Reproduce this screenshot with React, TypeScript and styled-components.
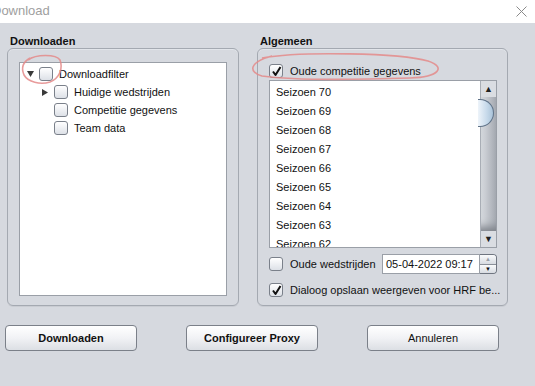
import styled, { createGlobalStyle } from "styled-components";

const GlobalStyle = createGlobalStyle`
  html, body {
    margin: 0;
    padding: 0;
    background: #d6d9df;
  }
  body {
    font-family: "Liberation Sans", Arial, sans-serif;
    font-size: 11px;
    color: #111;
  }
`;

/* ------------------ Window ------------------ */

const Window = styled.div`
  width: 535px;
  height: 386px;
  display: flex;
  flex-direction: column;
  background: #d6d9df;
  position: relative;
  overflow: hidden;
`;

const TitleBar = styled.div`
  height: 23px;
  background: #ffffff;
  display: flex;
  align-items: center;
  justify-content: space-between;
  padding: 0 8px 0 0;
  overflow: hidden;
`;

const Title = styled.span`
  margin-left: -8px;
  margin-top: -2px;
  font-family: "Liberation Sans", Arial, sans-serif;
  font-size: 13px;
  color: #a0a0a0;
`;

const Body = styled.div`
  display: flex;
  flex-direction: column;
  padding: 11px 0 0 7px;
`;

const Columns = styled.div`
  display: flex;
  gap: 18px;
`;

const Group = styled.div<{ $width: number }>`
  width: ${(p) => p.$width}px;
  display: flex;
  flex-direction: column;
`;

const GroupLabel = styled.div`
  font-weight: bold;
  font-size: 11px;
  height: 14px;
  line-height: 14px;
  padding-left: 3px;
`;

const Panel = styled.div<{ $pad: string }>`
  height: 258px;
  box-sizing: border-box;
  border: 1px solid #a4a9b1;
  border-radius: 6px;
  box-shadow: inset 0 1px 0 #e2e5ea, 0 1px 0 #c9ccd2;
  padding: ${(p) => p.$pad};
  display: flex;
  flex-direction: column;
`;

/* ------------------ Tree ------------------ */

const TreeBox = styled.div`
  flex: 1;
  background: #ffffff;
  border: 1px solid #9a9fa7;
  padding: 2px 0 0 4px;
`;

const TreeRow = styled.div<{ $indent: number }>`
  height: 18px;
  display: flex;
  align-items: center;
  padding-left: ${(p) => p.$indent}px;
`;

const Arrow = styled.span`
  width: 12px;
  display: inline-flex;
  justify-content: center;
  align-items: center;
  margin-right: 3px;
  svg {
    display: block;
  }
`;

const ArrowSpacer = styled.span`
  width: 15px;
`;

const Box = styled.span`
  width: 12px;
  height: 12px;
  border: 1px solid #7a808a;
  border-radius: 3px;
  background: linear-gradient(#ffffff, #dde1e7);
  display: inline-flex;
  align-items: center;
  justify-content: center;
  flex-shrink: 0;
  svg {
    display: block;
  }
`;

const Label = styled.span`
  margin-left: 6px;
  white-space: nowrap;
`;

/* ------------------ Right side ------------------ */

const CheckRow = styled.div<{ $mt?: number }>`
  display: flex;
  align-items: center;
  height: 16px;
  margin-top: ${(p) => p.$mt ?? 0}px;
`;

const CheckLabel = styled.span`
  margin-left: 7px;
  white-space: nowrap;
`;

const ListBox = styled.div`
  margin-top: 1px;
  height: 168px;
  box-sizing: border-box;
  border: 1px solid #9a9fa7;
  background: #ffffff;
  display: flex;
`;

const ListItems = styled.div`
  flex: 1;
  overflow: hidden;
  padding: 2px 0 0 6px;
`;

const ListItem = styled.div`
  height: 19px;
  line-height: 19px;
`;

const ScrollBar = styled.div`
  width: 15px;
  border-left: 1px solid #a9aeb6;
  display: flex;
  flex-direction: column;
`;

const ScrollArrow = styled.div`
  height: 16px;
  font-size: 9px;
  color: #222;
  display: flex;
  align-items: center;
  justify-content: center;
  background: #dadde2;
`;

const Track = styled.div`
  flex: 1;
  position: relative;
  background: linear-gradient(90deg, #d9dce1, #b9bdc4 60%, #a7abb3);
  box-shadow: inset 0 -10px 8px -6px #7c8088;
`;

const Thumb = styled.div`
  position: absolute;
  left: -3px;
  top: 2px;
  width: 16px;
  height: 28px;
  box-sizing: border-box;
  border: 1px solid #5f7288;
  border-left: none;
  border-radius: 0 14px 14px 0;
  background: linear-gradient(90deg, #eef4fa, #c6d9ea 60%, #aac3d9);
`;

const DateRow = styled.div`
  display: flex;
  align-items: center;
  margin-top: 6px;
  height: 20px;
`;

const DateField = styled.div`
  margin-left: auto;
  width: 98px;
  height: 20px;
  box-sizing: border-box;
  border: 1px solid #9a9fa7;
  background: #ffffff;
  display: flex;
  align-items: center;
  padding-left: 3px;
  white-space: nowrap;
  font-size: 11px;
`;

const Spinner = styled.div`
  width: 17px;
  height: 20px;
  box-sizing: border-box;
  border: 1px solid #6f7580;
  border-left: none;
  border-radius: 0 4px 4px 0;
  display: flex;
  flex-direction: column;
  overflow: hidden;
  flex-shrink: 0;
`;

const SpinHalf = styled.div<{ $dark?: boolean }>`
  flex: 1;
  font-size: 6px;
  display: flex;
  align-items: center;
  justify-content: center;
  color: ${(p) => (p.$dark ? "#111" : "#9aa0a8")};
  background: linear-gradient(#fafbfc, #d7dbe1);
  & + & {
    border-top: 1px solid #8a9099;
  }
`;

/* ------------------ Buttons ------------------ */

const ButtonRow = styled.div`
  display: flex;
  gap: 49px;
  margin: 19px 0 0 -2px;
`;

const Button = styled.button<{ $bold?: boolean }>`
  width: 132px;
  height: 26px;
  border: 1px solid #7b8089;
  border-radius: 4px;
  background: linear-gradient(#ffffff, #f1f2f5 50%, #dcdfe4);
  font-family: "Liberation Sans", Arial, sans-serif;
  font-size: 11px;
  font-weight: ${(p) => (p.$bold ? "bold" : "normal")};
  color: #111;
  padding: 0;
`;

/* ------------------ Annotation ------------------ */

const Marks = styled.svg`
  position: absolute;
  left: 0;
  top: 0;
  pointer-events: none;
`;

const Check = () => (
  <svg width="11" height="11" viewBox="0 0 11 11">
    <path
      d="M2 5.5 L4.5 9 L9.5 1"
      fill="none"
      stroke="#111"
      strokeWidth="2"
      strokeLinejoin="round"
    />
  </svg>
);

const Down = () => (
  <svg width="7" height="6" viewBox="0 0 7 6">
    <path d="M0 0 H7 L3.5 6 Z" fill="#3a3a3a" />
  </svg>
);

const Right = () => (
  <svg width="6" height="7" viewBox="0 0 6 7">
    <path d="M0 0 V7 L6 3.5 Z" fill="#3a3a3a" />
  </svg>
);

const CloseIcon = () => (
  <svg width="11" height="11" viewBox="0 0 11 11">
    <path d="M0.5 0.5 L10.5 10.5 M10.5 0.5 L0.5 10.5" stroke="#8a8a8a" strokeWidth="1" />
  </svg>
);

const seasons = [70, 69, 68, 67, 66, 65, 64, 63, 62];

const App = () => {
  return (
    <Window>
      <GlobalStyle />
      <TitleBar>
        <Title>Download</Title>
        <CloseIcon />
      </TitleBar>
      <Body>
        <Columns>
          <Group $width={232}>
            <GroupLabel>Downloaden</GroupLabel>
            <Panel $pad="13px 11px 9px 11px">
              <TreeBox>
                <TreeRow $indent={0}>
                  <Arrow>
                    <Down />
                  </Arrow>
                  <Box />
                  <Label>Downloadfilter</Label>
                </TreeRow>
                <TreeRow $indent={15}>
                  <Arrow>
                    <Right />
                  </Arrow>
                  <Box />
                  <Label>Huidige wedstrijden</Label>
                </TreeRow>
                <TreeRow $indent={15}>
                  <ArrowSpacer />
                  <Box />
                  <Label>Competitie gegevens</Label>
                </TreeRow>
                <TreeRow $indent={15}>
                  <ArrowSpacer />
                  <Box />
                  <Label>Team data</Label>
                </TreeRow>
              </TreeBox>
            </Panel>
          </Group>
          <Group $width={251}>
            <GroupLabel>Algemeen</GroupLabel>
            <Panel $pad="14px 10px 0 11px">
              <CheckRow>
                <Box>
                  <Check />
                </Box>
                <CheckLabel>Oude competitie gegevens</CheckLabel>
              </CheckRow>
              <ListBox>
                <ListItems>
                  {seasons.map((s) => (
                    <ListItem key={s}>Seizoen {s}</ListItem>
                  ))}
                </ListItems>
                <ScrollBar>
                  <ScrollArrow>▲</ScrollArrow>
                  <Track>
                    <Thumb />
                  </Track>
                  <ScrollArrow>▼</ScrollArrow>
                </ScrollBar>
              </ListBox>
              <DateRow>
                <Box />
                <CheckLabel>Oude wedstrijden</CheckLabel>
                <DateField>05-04-2022 09:17</DateField>
                <Spinner>
                  <SpinHalf>▲</SpinHalf>
                  <SpinHalf $dark>▼</SpinHalf>
                </Spinner>
              </DateRow>
              <CheckRow $mt={8}>
                <Box>
                  <Check />
                </Box>
                <CheckLabel>Dialoog opslaan weergeven voor HRF be...</CheckLabel>
              </CheckRow>
            </Panel>
          </Group>
        </Columns>
        <ButtonRow>
          <Button $bold>Downloaden</Button>
          <Button $bold>Configureer Proxy</Button>
          <Button>Annuleren</Button>
        </ButtonRow>
      </Body>
      <Marks width="535" height="386">
        <path
          d="M28 60 C 36 54, 56 54, 60 60 C 63 68, 60 78, 50 82 C 40 85, 28 82, 24 75 C 21 68, 23 62, 30 58"
          fill="none"
          stroke="#e48a8a"
          strokeWidth="1.6"
          opacity="0.85"
        />
        <path
          d="M262 58 C 300 51, 400 53, 428 61 C 446 67, 440 77, 410 78 C 350 80, 290 80, 262 76 C 248 72, 249 62, 272 56"
          fill="none"
          stroke="#e48a8a"
          strokeWidth="1.6"
          opacity="0.85"
        />
      </Marks>
    </Window>
  );
};

export default App;
